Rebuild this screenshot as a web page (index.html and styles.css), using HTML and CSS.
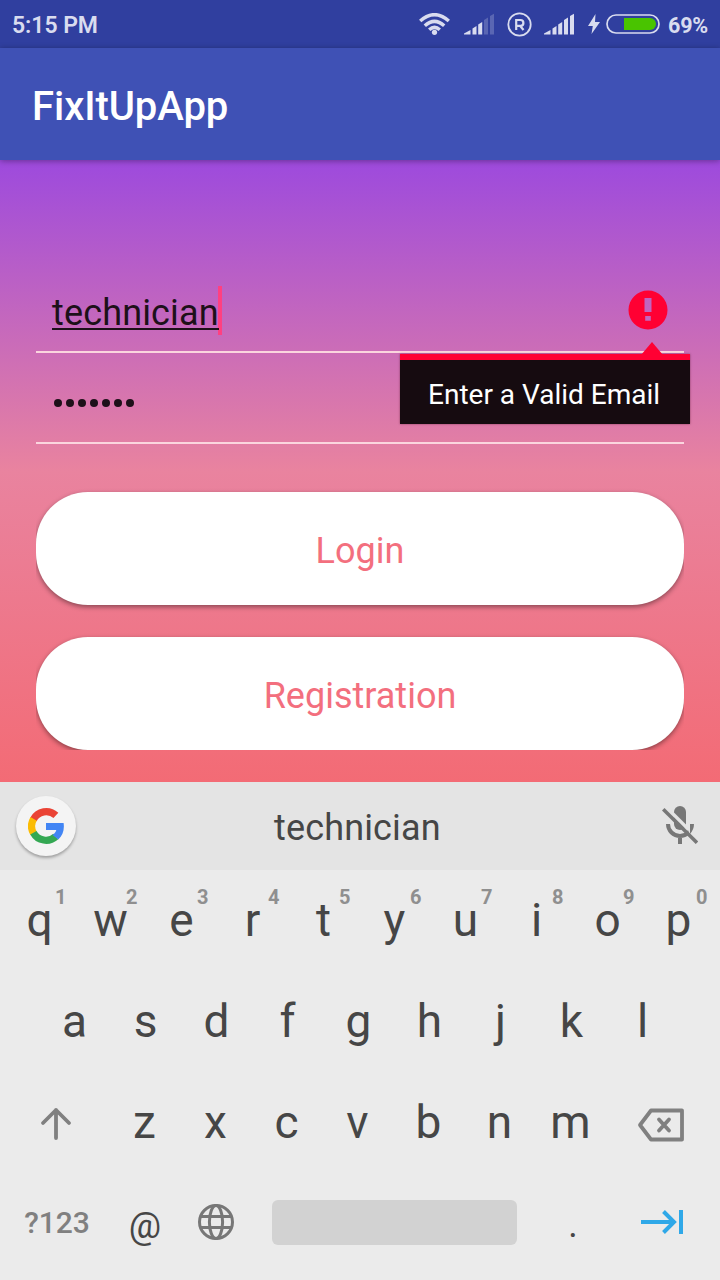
FILE: index.html
```html
<!DOCTYPE html>
<html lang="en">
<head>
<meta charset="utf-8">
<title>FixItUpApp</title>
<link rel="stylesheet" href="styles.css">
</head>
<body>
<div class="screen">
  <header class="status">
    <span class="clock">5:15 PM</span>
    <div class="status-icons">
      <svg class="wifi" width="31" height="22" viewBox="0 0 31 22">
        <g fill="none" stroke="currentColor" stroke-width="3.500">
          <path d="M1.200 8Q15.500 -4.600 29.800 8"/>
          <path d="M5.800 12.700Q15.500 4 25.200 12.700"/>
          <path d="M10.200 16.800Q15.500 12 20.800 16.800"/>
        </g>
        <circle cx="15.500" cy="19.300" r="2.600" fill="currentColor"/>
      </svg>
      <svg class="signal-weak" width="30" height="22" viewBox="0 0 30 22" fill="currentColor">
        <path d="M0 21.500V20.500L6.500 17V21.500zM8.500 21.500v-6l4-2.500V21.500zM14.200 21.500V11.500l4-2.500V21.500z"/>
        <path opacity=".25" d="M20 21.500V7l4-2.500V21.500zM26 21.500V3L30 .800V21.500z"/>
      </svg>
      <svg class="roaming" width="25" height="25" viewBox="0 0 25 25" fill="none" stroke="currentColor">
        <circle cx="12.500" cy="12.500" r="11.200" stroke-width="1.800"/>
        <path stroke-width="2.200" d="M9.200 18V8h4.300a2.900 2.900 0 0 1 0 5.800H9.200M13 13.800l3.500 4.200"/>
      </svg>
      <svg class="signal" width="30" height="22" viewBox="0 0 30 22" fill="currentColor">
        <path d="M0 21.500V20.500L6.500 17V21.500zM8.500 21.500v-6l4-2.500V21.500zM14.200 21.500V11.500l4-2.500V21.500zM20 21.500V7l4-2.500V21.500zM26 21.500V3L30 .800V21.500z"/>
      </svg>
      <svg class="bolt" width="12" height="20" viewBox="0 0 12 20" fill="currentColor"><path d="M7.500 0L0 12h4.800L3.500 20L12 8H7z"/></svg>
      <svg class="battery" width="54" height="20" viewBox="0 0 54 20">
        <rect x="1" y="1" width="52" height="18" rx="9" fill="none" stroke="currentColor" stroke-width="1.700"/>
        <path fill="#49c400" d="M18 4h26a6 6 0 0 1 0 12H18z"/>
      </svg>
      <span class="percent">69%</span>
    </div>
  </header>
  <div class="app-bar"><h1>FixItUpApp</h1></div>

  <main class="content">
    <div class="fields">
      <div class="field email">
        <span class="value">technician</span><span class="caret"></span>
        <svg class="error-icon" width="40" height="40" viewBox="0 0 40 40">
          <path fill="#ff0033" fill-rule="evenodd" d="M20 .5a19.500 19.500 0 1 0 0 39a19.500 19.500 0 1 0 0-39zM16.500 8h7v14h-7zM17.200 26h5.600v4.800h-5.600z"/>
        </svg>
      </div>
      <div class="field password">
        <svg width="84" height="10" viewBox="0 0 84 10" fill="#1d1019" role="img" aria-label="Password, 7 characters">
          <circle cx="6" cy="5" r="4"/><circle cx="18" cy="5" r="4"/><circle cx="30" cy="5" r="4"/><circle cx="42" cy="5" r="4"/><circle cx="54" cy="5" r="4"/><circle cx="66" cy="5" r="4"/><circle cx="78" cy="5" r="4"/>
        </svg>
      </div>
      <div class="error-popup"><span>Enter a Valid Email</span></div>
    </div>
    <div class="actions">
      <button class="action" type="button">Login</button>
      <button class="action" type="button">Registration</button>
    </div>
  </main>

  <section class="keyboard">
    <div class="suggestions">
      <span class="google">
        <svg width="36" height="36" viewBox="0 0 36 36" fill="none" stroke-width="7.200">
          <path stroke="#ea4335" d="M5.400 11.500A14.400 14.400 0 0 1 27.900 7.400"/>
          <path stroke="#fbbc05" d="M5.600 25.400A14.400 14.400 0 0 1 5.600 10.800"/>
          <path stroke="#34a853" d="M27.800 28.500A14.400 14.400 0 0 1 5.400 24.700"/>
          <path fill="#4285f4" stroke="none" d="M18 15h17.600c1 6.500-.8 12.500-5.300 16.400l-5.800-4.500c2-1.300 3.300-3 3.800-5H18z"/>
        </svg>
      </span>
      <span class="suggestion">technician</span>
      <svg class="mic" width="36" height="40" viewBox="0 0 36 40">
        <g fill="none" stroke="#777" stroke-width="4">
          <path d="M6 19a12 12 0 0 0 24 0M18 30v9"/>
        </g>
        <path fill="#777" d="M12 7a6 6 0 0 1 12 0v12a6 6 0 0 1-12 0z"/>
        <path stroke="#e4e4e4" stroke-width="3.500" d="M3.500 1.500L26.500 24.500"/>
        <path fill="#e4e4e4" d="M24 19h4v12z"/>
        <path stroke="#777" stroke-width="3.600" d="M1.200 4.200L35 37.800"/>
      </svg>
    </div>
    <div class="row row-top">
      <span class="key">q<sup>1</sup></span><span class="key">w<sup>2</sup></span><span class="key">e<sup>3</sup></span><span class="key">r<sup>4</sup></span><span class="key">t<sup>5</sup></span><span class="key">y<sup>6</sup></span><span class="key">u<sup>7</sup></span><span class="key">i<sup>8</sup></span><span class="key">o<sup>9</sup></span><span class="key">p<sup>0</sup></span>
    </div>
    <div class="row row-home">
      <span class="key">a</span><span class="key">s</span><span class="key">d</span><span class="key">f</span><span class="key">g</span><span class="key">h</span><span class="key">j</span><span class="key">k</span><span class="key">l</span>
    </div>
    <div class="row">
      <span class="key wide shift">
        <svg width="32" height="34" viewBox="0 0 32 34" fill="none" stroke="#808080" stroke-width="3.800" stroke-linecap="round" stroke-linejoin="round"><path d="M16 31V3M3 16L16 3L29 16"/></svg>
      </span>
      <span class="key">z</span><span class="key">x</span><span class="key">c</span><span class="key">v</span><span class="key">b</span><span class="key">n</span><span class="key">m</span>
      <span class="key wide backspace">
        <svg width="48" height="34" viewBox="0 0 48 34" fill="none" stroke="#808080" stroke-width="3.800" stroke-linejoin="round"><path d="M14 2.500H45V31.500H14L3 17z"/><path stroke-linecap="round" d="M22 11.500L32 22.500M32 11.500L22 22.500"/></svg>
      </span>
    </div>
    <div class="row row-bottom">
      <span class="key wide symbols">?123</span>
      <span class="key at">@</span>
      <span class="key">
        <svg width="38" height="38" viewBox="0 0 38 38" fill="none" stroke="#777" stroke-width="3"><circle cx="19" cy="19" r="16.500"/><ellipse cx="19" cy="19" rx="6.600" ry="16.500"/><path d="M4 13.500H34M4 24.500H34"/></svg>
      </span>
      <span class="space"></span>
      <span class="key dot">.</span>
      <span class="key wide next">
        <svg width="44" height="26" viewBox="0 0 44 26" fill="none" stroke="#2fa8e8" stroke-width="4"><path d="M1 13H34M23.500 2.500L34 13L23.500 23.500M41 1v24"/></svg>
      </span>
    </div>
  </section>
</div>
</body>
</html>
```
FILE: styles.css
```css
* { box-sizing: border-box; }

body {
  margin: 0;
  font-family: Roboto, "Noto Sans", sans-serif;
}

.screen {
  width: 720px;
  height: 1280px;
  display: flex;
  flex-direction: column;
  overflow: hidden;
}

svg { display: block; flex: none; }

.status {
  height: 48px;
  padding: 2px 12px 0;
  display: flex;
  align-items: center;
  justify-content: space-between;
  background: #303f9f;
  color: #d9dcef;
  font-size: 23px;
  font-weight: 700;
}

.clock, .percent { line-height: 46px; padding-top: 1px; }
.clock { font-weight: 600; letter-spacing: -.05px; }
.percent { font-size: 21.5px; margin-left: 8px; letter-spacing: -.2px; }

.status-icons {
  display: flex;
  align-items: center;
  height: 44px;
}
.wifi { margin-bottom: 3px; }
.signal-weak { margin-left: 14px; margin-bottom: 2px; }
.roaming { margin-left: 12.5px; margin-bottom: 2px; }
.signal { margin-left: 12.5px; margin-bottom: 2px; }
.bolt { margin-left: 14px; margin-bottom: 2px; }
.battery { margin-left: 6px; margin-bottom: 2px; }

.app-bar {
  position: relative;
  z-index: 1;
  height: 112px;
  padding: 5px 32px 0;
  display: flex;
  align-items: center;
  background: #3f51b5;
  box-shadow: 0 1px 6px rgba(0, 0, 0, .35);
}

h1 {
  margin: 0;
  color: #fff;
  font-size: 40px;
  font-weight: 500;
  letter-spacing: -.05px;
}

.content {
  height: 622px;
  padding: 112px 36px 32px;
  background: linear-gradient(#9d4add, #e9839f 50%, #f36b75);
}

.fields { position: relative; height: 210px; }

.field {
  display: flex;
  align-items: center;
  border-bottom: 2px solid #fbd5de;
}

.email { height: 81px; padding: 0 16px 3px; }
.password { height: 91px; padding: 11px 16px 0; }

.value {
  position: relative;
  padding-top: 7px;
  font-size: 36px;
  line-height: 43px;
  letter-spacing: .15px;
  color: #1d1019;
}

.value::after {
  content: "";
  position: absolute;
  left: 0;
  right: 0;
  top: 43px;
  height: 2px;
  background: #1d1019;
}

.caret { width: 4px; height: 49px; margin: 1px 0 0 -1px; background: #ff4081; }
.error-icon { margin-left: auto; }

.error-popup {
  position: absolute;
  top: 82px;
  right: -6px;
  width: 290px;
  height: 70px;
  padding-left: 28px;
  background: #160b10;
  border-top: 6px solid #ff0033;
  box-shadow: 0 0 2px rgba(60, 0, 20, .5);
  color: #fff;
  font-size: 28px;
  line-height: 69px;
}

.error-popup::before {
  content: "";
  position: absolute;
  top: -18px;
  left: 241px;
  border: solid transparent;
  border-width: 0 11px 13px;
  border-bottom-color: #ff0033;
}

.actions {
  height: 268px;
  padding-top: 10px;
  display: flex;
  flex-direction: column;
  gap: 32px;
  overflow: hidden;
}

.action {
  flex: none;
  height: 113px;
  border: 0;
  border-radius: 52px;
  padding: 4px 0 0;
  background: #fff;
  color: #f36f7e;
  font: 36px Roboto, sans-serif;
  box-shadow: 0 2px 5px rgba(0, 0, 0, .42);
}

.keyboard {
  height: 498px;
  background: #ebebeb;
  color: #464646;
}

.suggestions {
  height: 88px;
  padding: 0 22px 0 16px;
  display: flex;
  align-items: center;
  background: #e4e4e4;
}

.google {
  width: 60px;
  height: 60px;
  display: grid;
  place-items: center;
  border-radius: 50%;
  background: #f4f4f4;
  box-shadow: 0 2px 3px rgba(0, 0, 0, .3);
}

.suggestion {
  margin-left: 198px;
  padding-top: 4px;
  font-size: 36px;
  letter-spacing: .15px;
}

.mic { margin: 0 0 2px auto; }

.row { height: 101px; display: flex; align-items: center; }
.row-top { padding-left: 4px; }
.row-home { padding-left: 39px; }

.key {
  position: relative;
  width: 71px;
  height: 101px;
  padding-bottom: 1px;
  flex: none;
  display: flex;
  align-items: center;
  justify-content: center;
  font-size: 46px;
}

.key sup {
  position: absolute;
  top: 15px;
  left: 51px;
  color: #8f8f8f;
  font-size: 20px;
  font-weight: 700;
  line-height: 24px;
}

.key:last-child sup { left: 53px; }

.wide { width: 109px; }
.shift { padding: 3px 0 0 3px; }
.backspace { padding: 4px 0 0 1px; }
.row-bottom { padding-bottom: 2px; }
.symbols { padding-left: 5px; color: #808080; font-size: 30px; font-weight: 500; }
.at { font-size: 36px; padding: 6px 0 0 1px; }
.dot { margin-left: 20px; font-size: 36px; padding: 4px 0 0 1px; }
.next { padding: 0 1px 1px 0; }

.space {
  width: 245px;
  height: 45px;
  margin-left: 21px;
  border-radius: 6px;
  background: #d2d2d2;
}
```
